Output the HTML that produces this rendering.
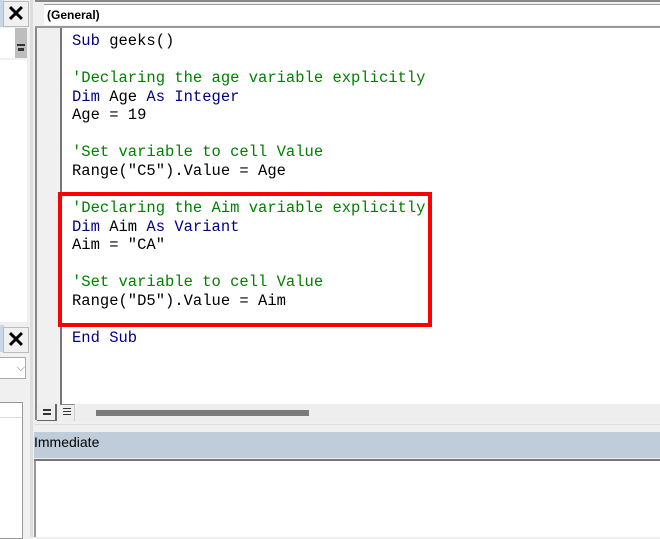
<!DOCTYPE html>
<html><head><style>
body{margin:0;width:660px;height:537px;position:relative;overflow:hidden;background:#f0f0f0;font-family:"Liberation Sans",sans-serif}
.a{position:absolute}
.code{position:absolute;left:72px;font-family:"Liberation Mono",monospace;font-size:15.5px;line-height:18.56px;white-space:pre;color:#000}
.k{color:#00008b}.c{color:#008000}
.xb{position:absolute;width:24px;height:24px;background:#f0f0f0;border:1px solid #bbb;font:bold 22px/24px "Liberation Sans",sans-serif;text-align:center}
</style></head><body>
<div class="a" style="left:0;top:0;width:30px;height:537px;background:#f0f0f0"></div>
<div class="a" style="left:0;top:0;width:4px;height:27px;background:#c9d6e3"></div>
<div class="xb" style="left:3px;top:1px;">✕</div>
<div class="a" style="left:0;top:28px;width:15px;height:30px;background:#fff"></div>
<div class="a" style="left:15px;top:28px;width:12px;height:30px;background:#bdbdbd"></div>
<div class="a" style="left:17px;top:44px;width:8px;height:2px;background:#333"></div>
<div class="a" style="left:18px;top:48px;width:6px;height:3px;background:#333"></div>
<div class="a" style="left:0;top:60px;width:27px;height:262px;background:#fff"></div>
<div class="a" style="left:0;top:325px;width:4px;height:27px;background:#c9d6e3"></div>
<div class="xb" style="left:3px;top:327px;">✕</div>
<div class="a" style="left:0;top:357px;width:25px;height:20px;background:#fff;border:1px solid #aaa;border-left:none;font-size:11px;color:#777;text-align:right;line-height:20px">⌵</div>
<div class="a" style="left:0;top:402px;width:22px;height:135px;background:#fff;border:1px solid #999;border-left:none"></div>
<div class="a" style="left:0;top:417px;width:22px;height:1px;background:#ddd"></div>
<div class="a" style="left:30px;top:0;width:3px;height:537px;background:#ddd"></div>
<div class="a" style="left:35px;top:0;width:625px;height:2px;background:#888"></div>
<div class="a" style="left:35px;top:2px;width:625px;height:26px;background:#f0f0f0"></div>
<div class="a" style="left:44px;top:4px;width:616px;height:20px;background:#fff;border-top:1px solid #999;font-weight:bold;font-size:12px;line-height:20px;padding-left:3px">(General)</div>
<div class="a" style="left:35px;top:26px;width:625px;height:2px;background:#999"></div>
<div class="a" style="left:35px;top:28px;width:2px;height:392px;background:#888"></div>
<div class="a" style="left:37px;top:28px;width:23px;height:376px;background:#f0f0f0"></div>
<div class="a" style="left:60px;top:28px;width:2px;height:376px;background:#777"></div>
<div class="a" style="left:62px;top:28px;width:598px;height:376px;background:#fff"></div>
<div class="code" style="top:32px"><span class="k">Sub</span> geeks()

<span class="c">'Declaring the age variable explicitly</span>
<span class="k">Dim</span> Age <span class="k">As Integer</span>
Age = 19

<span class="c">'Set variable to cell Value</span>
Range("C5").Value = Age

<span class="c">'Declaring the Aim variable explicitly</span>
<span class="k">Dim</span> Aim <span class="k">As Variant</span>
Aim = "CA"

<span class="c">'Set variable to cell Value</span>
Range("D5").Value = Aim

<span class="k">End Sub</span></div>
<div class="a" style="left:58px;top:192px;width:366px;height:127px;border:4px solid #f00"></div>
<div class="a" style="left:37px;top:404px;width:623px;height:18px;background:#eee"></div>
<div class="a" style="left:37px;top:404px;width:18px;height:16px;border-right:2px solid #666;border-bottom:1px solid #666"></div>
<div class="a" style="left:43px;top:409px;width:8px;height:2px;background:#333"></div>
<div class="a" style="left:43px;top:413px;width:8px;height:2px;background:#333"></div>
<div class="a" style="left:60px;top:404px;width:14px;height:16px;border-top:1px solid #888;border-right:1px solid #ccc"></div>
<div class="a" style="left:63px;top:408px;width:8px;height:1px;background:#333"></div>
<div class="a" style="left:63px;top:411px;width:8px;height:1px;background:#333"></div>
<div class="a" style="left:63px;top:414px;width:8px;height:1px;background:#333"></div>
<div class="a" style="left:96px;top:410px;width:213px;height:6px;background:#7a7a7a"></div>
<div class="a" style="left:35px;top:424px;width:625px;height:1px;background:#ddd"></div>
<div class="a" style="left:34px;top:432px;width:626px;height:26px;background:#bfcdda;font-size:14px;line-height:20px;color:#000">Immediate</div>
<div class="a" style="left:34px;top:459px;width:626px;height:2px;background:#777"></div>
<div class="a" style="left:34px;top:461px;width:2px;height:76px;background:#999"></div>
<div class="a" style="left:36px;top:461px;width:624px;height:76px;background:#fff"></div>
</body></html>
